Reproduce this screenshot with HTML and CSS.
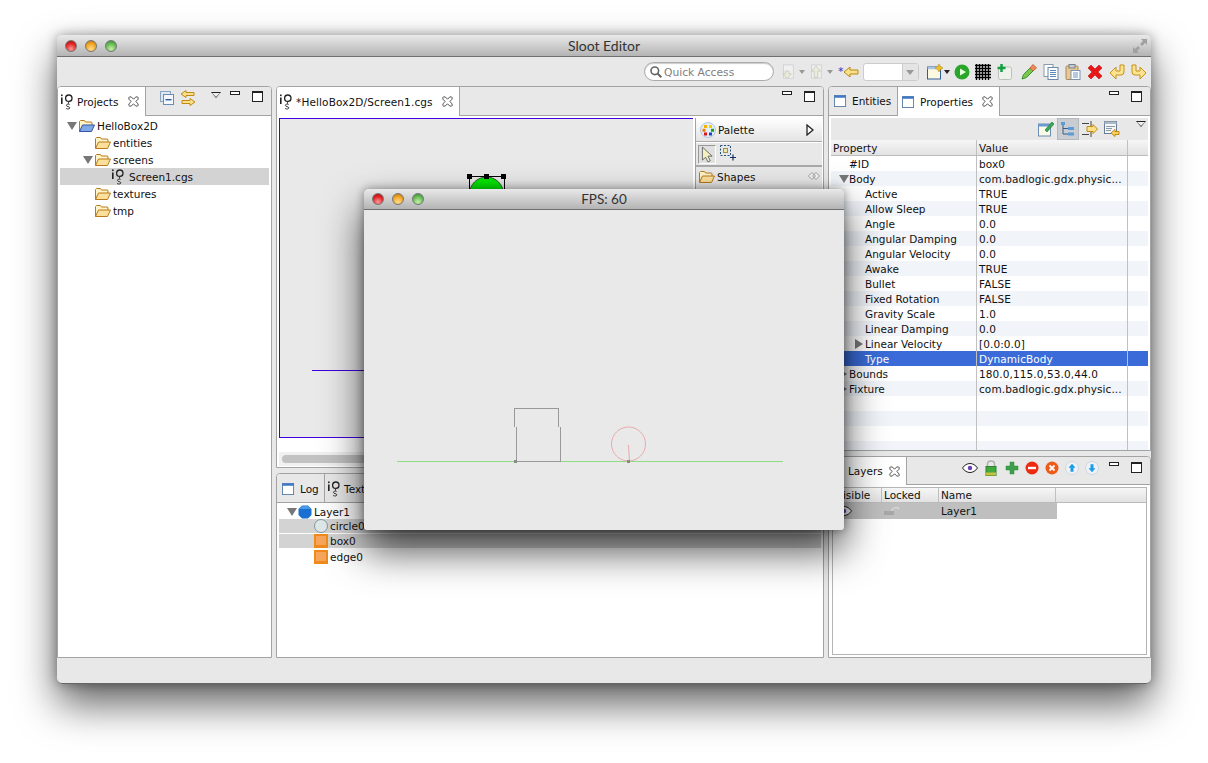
FILE: index.html
```html
<!DOCTYPE html>
<html lang="en">
  <head>
    <meta charset="UTF-8" />
    <title>Sloot Editor</title>
    <link rel="stylesheet" href="styles.css">
  </head>
  <body>
    <svg class="defs" width="0" height="0">
      <symbol id="i-ig" viewBox="0 0 12 16">
        <rect x="0" y="0.5" width="1.6" height="1.6" fill="#222" />
        <rect x="0" y="3.5" width="1.6" height="6.5" fill="#222" />
        <circle cx="7.8" cy="4.2" r="3.2" fill="none" stroke="#222" stroke-width="1.3" />
        <path d="M7.6 7.5v2.3M8.6 10.6c-1-.8-3.2-.6-3.2.8s3.4 1 3.4 2.4-2.5 1.5-3.6.7" fill="none" stroke="#333" stroke-width="1" />
      </symbol>
      <symbol id="i-folder" viewBox="0 0 16 14">
        <path d="M.5 12.5v-10l1-1h4l1 1.5h6l.5 1v2" fill="#fff3c8" stroke="#b87a1c" />
        <path d="M.5 12.5l3-6.500h12l-3 6.500z" fill="#fbdf9a" stroke="#b87a1c" />
      </symbol>
      <symbol id="i-project" viewBox="0 0 16 14">
        <path d="M.5 12.5v-10l1-1h4l1 1.5h6l.5 1v2" fill="#fff3c8" stroke="#b87a1c" />
        <path d="M.5 12.5l3-6.500h12l-3 6.500z" fill="#7fa8e6" stroke="#3553a8" />
      </symbol>
      <symbol id="i-view" viewBox="0 0 14 13">
        <rect x=".5" y=".5" width="12" height="12" fill="#fff" stroke="#5a7fa8" />
        <rect x=".5" y=".5" width="12" height="2.500" fill="#3f78c8" />
      </symbol>
      <symbol id="i-close" viewBox="0 0 12 12">
        <path d="M1.500 1h2l2.500 2.500 2.500-2.500h2l.5.5v2l-2.500 2.500 2.500 2.500v2l-.5.5h-2l-2.500-2.500-2.500 2.500h-2l-.5-.5v-2l2.500-2.500-2.500-2.500v-2z" fill="#fff" stroke="#444" />
      </symbol>
      <symbol id="i-collapse" viewBox="0 0 14 14">
        <rect x=".5" y=".5" width="10" height="10" fill="#dfe8f2" stroke="#8aa4c4" />
        <rect x="3.500" y="3.500" width="10" height="10" fill="#f4f7fb" stroke="#6a8cb4" />
        <rect x="5.500" y="8" width="6" height="1.400" fill="#2a5a98" />
      </symbol>
      <symbol id="i-link" viewBox="0 0 16 16">
        <path d="M6 .5l-5 3.500 5 3.500v-2h8v-3h-8z" fill="#fbe08a" stroke="#c08a14" />
        <path d="M10 8.500l5 3.500-5 3.500v-2h-8v-3h8z" fill="#fbe08a" stroke="#c08a14" />
      </symbol>
      <symbol id="i-palette" viewBox="0 0 16 16">
        <circle cx="8" cy="8" r="7.500" fill="#e4eef8" stroke="#b0c4dc" />
        <rect x="4" y="3" width="3" height="3" fill="#f0b400" />
        <rect x="9" y="3" width="3" height="3" fill="#e8d400" />
        <rect x="2.500" y="6.800" width="3" height="3" fill="#f08000" />
        <rect x="11" y="6.800" width="3" height="3" fill="#10a810" />
        <rect x="4" y="10.500" width="3" height="3" fill="#d81818" />
        <rect x="9" y="10.500" width="3" height="3" fill="#2040c8" />
      </symbol>
      <symbol id="i-play-hollow" viewBox="0 0 8 12">
        <path d="M1 1l6 5-6 5z" fill="#fff" stroke="#222" stroke-width="1.300" />
      </symbol>
      <symbol id="i-pin" viewBox="0 0 12 8">
        <path d="M4 .5l3.500 3.500-3.500 3.500-3.500-3.500zM8 .5l3.500 3.500-3.500 3.500-3.500-3.500z" fill="#f4f4f4" stroke="#888" stroke-width=".8" />
      </symbol>
      <symbol id="i-cursor" viewBox="0 0 14 18">
        <path d="M1.500 1v14l3.500-3 2.500 5 2.500-1.200-2.500-5h4.500z" fill="#f4f0c0" stroke="#666" />
      </symbol>
      <symbol id="i-marquee" viewBox="0 0 16 16">
        <rect x=".5" y=".5" width="10" height="10" fill="none" stroke="#25507c" stroke-dasharray="2 1.500" />
        <rect x="3.500" y="3.500" width="4" height="4" fill="#eee8b0" stroke="#99905a" />
        <path d="M13 9.500v6M10 12.500h6" stroke="#103060" stroke-width="1.200" />
      </symbol>
      <symbol id="i-back" viewBox="0 0 16 16">
        <path d="M1 8l6-5v3h8v4h-8v3z" fill="#fbe08a" stroke="#b88a14" />
      </symbol>
      <symbol id="i-dis-down" viewBox="0 0 16 18">
        <rect x="3" y="1" width="11" height="15" fill="#f0f0f0" stroke="#d0d0d0" />
        <path d="M5 8h4v3h3l-5 5-5-5h3z" fill="#e8ecd8" stroke="#c8ccc0" />
      </symbol>
      <symbol id="i-dis-up" viewBox="0 0 16 18">
        <rect x="3" y="1" width="11" height="15" fill="#f0f0f0" stroke="#d0d0d0" />
        <path d="M8 2l5 6h-3v7h-4v-7h-3z" fill="#e8ecd8" stroke="#c8ccc0" />
      </symbol>
      <symbol id="i-wizard" viewBox="0 0 16 16">
        <rect x=".5" y="3" width="13" height="12" fill="#fdf8e0" stroke="#2f5f98" />
        <rect x=".5" y="3" width="13" height="2.200" fill="#a9c4e4" />
        <path d="M12 0l1.500 2.500L16 4l-2.500 1.500L12 8l-1.500-2.500L8 4l2.500-1.500z" fill="#f0c020" stroke="#a8801a" stroke-width=".5" />
      </symbol>
      <symbol id="i-run" viewBox="0 0 16 16">
        <circle cx="8" cy="8" r="7.500" fill="#2aa62a" />
        <path d="M6 4.500l6 3.500-6 3.500z" fill="#e8ffe0" />
      </symbol>
      <symbol id="i-grid" viewBox="0 0 16 16">
        <path d="M0 1.500h16M0 4.500h16M0 7.500h16M0 10.500h16M0 13.500h16M1.500 0v16M4.500 0v16M7.500 0v16M10.500 0v16M13.500 0v16" stroke="#000" stroke-width="1.300" />
      </symbol>
      <symbol id="i-newbox" viewBox="0 0 16 16">
        <rect x="1.500" y="3" width="13" height="12.500" rx="2" fill="#f0f2ec" stroke="#bcc0bc" />
        <path d="M4.500 0v8M.5 4h8" stroke="#12a040" stroke-width="2.500" />
      </symbol>
      <symbol id="i-pencil" viewBox="0 0 16 16">
        <path d="M1 15l1.500-4.500 6.500-6.500 3 3-6.500 6.500z" fill="#78c850" stroke="#3f9030" />
        <path d="M9 4l3-3.500 3.500 3.500-3.500 3z" fill="#f08858" stroke="#c06840" />
      </symbol>
      <symbol id="i-copy" viewBox="0 0 16 16">
        <rect x="1" y=".5" width="9" height="12" fill="#fff" stroke="#8a9aaa" />
        <rect x="5" y="3.500" width="10" height="12" fill="#fdfeff" stroke="#6a88a8" />
        <path d="M7 6.500h6M7 8.500h6M7 10.500h6M7 12.500h6" stroke="#5a88b8" />
      </symbol>
      <symbol id="i-paste" viewBox="0 0 16 16">
        <rect x="1" y="2" width="12" height="13.500" rx="1" fill="#e8c890" stroke="#a88a5a" />
        <rect x="4" y=".5" width="6" height="3.500" fill="#c8ccd0" stroke="#77808a" />
        <rect x="6" y="6.500" width="9" height="9" fill="#fff" stroke="#7a94b0" />
        <path d="M8 9h5M8 11h5M8 13h5" stroke="#6a94c0" />
      </symbol>
      <symbol id="i-x" viewBox="0 0 16 16">
        <path d="M1 4l3-3 4 4 4-4 3 3-4 4 4 4-3 3-4-4-4 4-3-3 4-4z" fill="#e81818" stroke="#c01010" stroke-width=".6" />
      </symbol>
      <symbol id="i-undo" viewBox="0 0 16 16">
        <path d="M1 9l6-6v4h4v-6h4v7q0 3-3 3h-5v4z" fill="#fce48e" stroke="#c8901a" />
      </symbol>
      <symbol id="i-redo" viewBox="0 0 16 16">
        <path d="M15 9l-6-6v4h-4v-6h-4v7q0 3 3 3h5v4z" fill="#fce48e" stroke="#c8901a" />
      </symbol>
      <symbol id="i-props-new" viewBox="0 0 16 16">
        <rect x=".5" y="3" width="12" height="12" fill="#fdfbe8" stroke="#6a8cb4" />
        <rect x=".5" y="3" width="12" height="2.500" fill="#6a9cd4" />
        <path d="M7 9l7-8 2 2-7 8z" fill="#38a858" stroke="#1f7038" stroke-width=".6" />
      </symbol>
      <symbol id="i-tree" viewBox="0 0 16 16">
        <rect x="1" y="1" width="4" height="3" fill="#5a9cd8" />
        <rect x="8" y="6" width="6" height="3" fill="#5a9cd8" />
        <rect x="8" y="11.500" width="6" height="3" fill="#5a9cd8" />
        <path d="M3 4v9h5M3 7.500h5" fill="none" stroke="#3a5a88" />
      </symbol>
      <symbol id="i-filter" viewBox="0 0 16 16">
        <path d="M0 2.500h7M0 13.500h7M9 0v5M9 11v5" stroke="#444" />
        <path d="M5 5.500h6v-2l4.500 4.500-4.500 4.500v-2h-6z" fill="#fbe08a" stroke="#c08a14" />
      </symbol>
      <symbol id="i-restore" viewBox="0 0 16 16">
        <rect x=".5" y=".5" width="12" height="12" fill="#f4f6f8" stroke="#6a7c94" />
        <rect x=".5" y=".5" width="12" height="2.500" fill="#aab8c8" />
        <path d="M2 5.500h9M2 7.500h6M2 9.500h5" stroke="#8a98a8" />
        <path d="M7 12l4-3.500v2h4v3h-4v2z" fill="#fbd060" stroke="#c08a14" />
      </symbol>
      <symbol id="i-eye" viewBox="0 0 16 10">
        <path d="M.5 5c4-6 11-6 15 0-4 6-11 6-15 0z" fill="#fff" stroke="#222" />
        <circle cx="8" cy="5" r="2.200" fill="#6a3fb8" />
      </symbol>
      <symbol id="i-lock" viewBox="0 0 12 16">
        <path d="M2.500 7v-3c0-4 7-4 7 0v3" fill="none" stroke="#aab0aa" stroke-width="1.500" />
        <rect x="1" y="6.500" width="10" height="9" fill="#3fa83f" stroke="#2f802f" />
        <rect x="1" y="12.500" width="10" height="3" fill="#c8c040" />
      </symbol>
      <symbol id="i-plus" viewBox="0 0 14 14">
        <path d="M5 1h4v4h4v4h-4v4h-4v-4h-4v-4h4z" fill="#3aa04a" stroke="#2f8a3f" stroke-width=".5" />
      </symbol>
      <symbol id="i-minus" viewBox="0 0 14 14">
        <circle cx="7" cy="7" r="6.500" fill="#ee2a12" />
        <rect x="3" y="5.800" width="8" height="2.400" fill="#fff" />
      </symbol>
      <symbol id="i-cancel" viewBox="0 0 14 14">
        <circle cx="7" cy="7" r="6.500" fill="#f05a18" />
        <path d="M4.500 4.500l5 5M9.500 4.500l-5 5" stroke="#fff" stroke-width="1.800" />
      </symbol>
      <symbol id="i-up" viewBox="0 0 14 14">
        <circle cx="7" cy="7" r="6.500" fill="#eef2f6" stroke="#cfd6dc" />
        <path d="M7 2.800l3.500 4h-2v4h-3v-4h-2z" fill="#1a9ce8" />
      </symbol>
      <symbol id="i-down" viewBox="0 0 14 14">
        <circle cx="7" cy="7" r="6.500" fill="#eef2f6" stroke="#cfd6dc" />
        <path d="M7 11.200l3.500-4h-2v-4h-3v4h-2z" fill="#1a9ce8" />
      </symbol>
      <symbol id="i-layer" viewBox="0 0 14 14">
        <path d="M4 .5h6l3.500 3.500v6l-3.500 3.500h-6l-3.500-3.500v-6z" fill="#1a70d0" />
        <path d="M4 1h6l3 3h-12z" fill="#4a98e8" />
      </symbol>
      <symbol id="i-circle" viewBox="0 0 14 14">
        <circle cx="7" cy="7" r="6.500" fill="#dfe8e6" stroke="#7f9aa0" />
      </symbol>
      <symbol id="i-box" viewBox="0 0 14 14">
        <rect width="14" height="14" fill="#f08a1c" />
        <rect x="2" y="2" width="10" height="9" fill="#f6a55c" />
      </symbol>
      <symbol id="i-unlock" viewBox="0 0 16 8">
        <rect x="0" y="4" width="10" height="4" fill="#a8a8a8" />
        <path d="M8 4c0-4 6-4 7-2" fill="none" stroke="#ddd" stroke-width="1.200" />
      </symbol>
      <symbol id="i-fullscreen" viewBox="0 0 14 14">
        <path d="M8 0h6v6l-2-2-3 3-2-2 3-3zM6 14h-6v-6l2 2 3-3 2 2-3 3z" fill="#a0a0a0" />
      </symbol>
      <symbol id="i-search" viewBox="0 0 12 12">
        <circle cx="4.800" cy="4.800" r="3.800" fill="none" stroke="#666" stroke-width="1.600" />
        <path d="M7.500 7.500l3.800 3.800" stroke="#666" stroke-width="2" />
      </symbol>
    </svg>

    <div class="app-window">
      <header class="titlebar">
        <span class="light red"></span><span class="light amber"></span><span class="light green"></span>
        <span class="title">Sloot Editor</span>
        <svg class="fullscreen"><use href="#i-fullscreen" /></svg>
      </header>

      <div class="toolbar">
        <div class="quick-access"><svg class="search"><use href="#i-search" /></svg>Quick Access</div>
        <svg class="tool"><use href="#i-dis-down" /></svg><span class="caret dim"></span>
        <svg class="tool tool-tight"><use href="#i-dis-up" /></svg><span class="caret dim"></span>
        <span class="star">*</span><svg class="tool tool-back"><use href="#i-back" /></svg>
        <div class="combo"><span class="combo-btn"></span></div>
        <svg class="tool tool-wide"><use href="#i-wizard" /></svg><span class="caret"></span>
        <svg class="tool tool-run"><use href="#i-run" /></svg>
        <svg class="tool tool-grid"><use href="#i-grid" /></svg>
        <svg class="tool"><use href="#i-newbox" /></svg>
        <svg class="tool tool-wide"><use href="#i-pencil" /></svg>
        <svg class="tool"><use href="#i-copy" /></svg>
        <svg class="tool"><use href="#i-paste" /></svg>
        <svg class="tool"><use href="#i-x" /></svg>
        <svg class="tool"><use href="#i-undo" /></svg>
        <svg class="tool"><use href="#i-redo" /></svg>
      </div>

      <div class="workbench">
        <section class="panel">
          <div class="tabs">
            <div class="tab active tab-projects"><svg class="ic-ig"><use href="#i-ig" /></svg>Projects<svg class="ic-close"><use href="#i-close" /></svg></div>
            <div class="tab-tools tools-projects">
              <svg class="ic14"><use href="#i-collapse" /></svg>
              <svg class="ic16"><use href="#i-link" /></svg>
            </div>
            <div class="view-ctrl"><span class="view-menu"></span><span class="min"></span><span class="max"></span></div>
          </div>
          <ul class="tree tree-projects">
            <li class="row"><span class="twist open"></span><svg class="ic-folder"><use href="#i-project" /></svg>HelloBox2D</li>
            <li class="row d1"><span class="twist"></span><svg class="ic-folder"><use href="#i-folder" /></svg>entities</li>
            <li class="row d1"><span class="twist open"></span><svg class="ic-folder"><use href="#i-folder" /></svg>screens</li>
            <li class="row d2 sel"><span class="twist"></span><svg class="ic-ig"><use href="#i-ig" /></svg>Screen1.cgs</li>
            <li class="row d1"><span class="twist"></span><svg class="ic-folder"><use href="#i-folder" /></svg>textures</li>
            <li class="row d1"><span class="twist"></span><svg class="ic-folder"><use href="#i-folder" /></svg>tmp</li>
          </ul>
        </section>

        <div class="stack stack-center">
          <section class="panel editor-panel">
            <div class="tabs">
              <div class="tab active tab-editor"><svg class="ic-ig"><use href="#i-ig" /></svg>*HelloBox2D/Screen1.cgs<svg class="ic-close"><use href="#i-close" /></svg></div>
              <div class="view-ctrl"><span class="min"></span><span class="max"></span></div>
            </div>
            <div class="editor-body">
              <div class="editor">
                <div class="canvas">
                  <svg class="shape" width="44" height="20">
                    <circle cx="21.500" cy="21" r="17" fill="#00e800" stroke="#333" stroke-width=".8" />
                    <path d="M4.500 3.500h35M4.500 3.500v16M39.500 3.500v16" fill="none" stroke="#000" />
                    <rect x="2" y="1" width="5" height="5" />
                    <rect x="19" y="1" width="5" height="5" />
                    <rect x="36" y="1" width="5" height="5" />
                  </svg>
                  <div class="edge-line"></div>
                </div>
                <div class="hscroll"><div class="hscroll-thumb"></div></div>
              </div>
              <aside class="palette">
                <div class="palette-head"><svg class="ic16"><use href="#i-palette" /></svg>Palette<svg class="palette-arrow"><use href="#i-play-hollow" /></svg></div>
                <div class="palette-tools">
                  <span class="palette-tool on"><svg class="ic-cursor"><use href="#i-cursor" /></svg></span>
                  <span class="palette-tool"><svg class="ic16"><use href="#i-marquee" /></svg></span>
                </div>
                <div class="palette-drawer"><svg class="ic-folder"><use href="#i-folder" /></svg>Shapes<svg class="drawer-pin"><use href="#i-pin" /></svg></div>
              </aside>
            </div>
          </section>

          <section class="panel log-panel">
            <div class="tabs">
              <div class="tab tab-log"><svg class="ic-view"><use href="#i-view" /></svg>Log</div>
              <div class="tab tab-text"><svg class="ic-ig"><use href="#i-ig" /></svg>Text</div>
            </div>
            <ul class="tree tree-log">
              <li class="row"><span class="twist open"></span><svg class="ic-obj"><use href="#i-layer" /></svg>Layer1</li>
              <li class="row d1 sel"><span class="twist"></span><svg class="ic-obj"><use href="#i-circle" /></svg>circle0</li>
              <li class="row d1 sel"><span class="twist"></span><svg class="ic-obj"><use href="#i-box" /></svg>box0</li>
              <li class="row d1"><span class="twist"></span><svg class="ic-obj"><use href="#i-box" /></svg>edge0</li>
            </ul>
          </section>
        </div>

        <div class="stack stack-right">
          <section class="panel props-panel">
            <div class="tabs">
              <div class="tab tab-entities"><svg class="ic-view"><use href="#i-view" /></svg>Entities</div>
              <div class="tab active tab-props"><svg class="ic-view"><use href="#i-view" /></svg>Properties<svg class="ic-close"><use href="#i-close" /></svg></div>
              <div class="view-ctrl"><span class="min"></span><span class="max"></span></div>
            </div>
            <div class="props-tools">
              <svg class="ic16"><use href="#i-props-new" /></svg>
              <span class="toggle"><svg class="ic16"><use href="#i-tree" /></svg></span>
              <svg class="ic16"><use href="#i-filter" /></svg>
              <svg class="ic16"><use href="#i-restore" /></svg>
              <span class="view-menu"></span>
            </div>
            <div class="props-table">
              <div class="props-head"><span class="col-name">Property</span><span class="col-value">Value</span><span class="col-rest"></span></div>
              <div class="prop"><span class="col-name in1">#ID</span><span class="col-value">box0</span><span class="col-rest"></span></div>
              <div class="prop"><span class="col-name in1"><i class="twist open prop-twist"></i>Body</span><span class="col-value">com.badlogic.gdx.physic...</span><span class="col-rest"></span></div>
              <div class="prop"><span class="col-name in2">Active</span><span class="col-value">TRUE</span><span class="col-rest"></span></div>
              <div class="prop"><span class="col-name in2">Allow Sleep</span><span class="col-value">TRUE</span><span class="col-rest"></span></div>
              <div class="prop"><span class="col-name in2">Angle</span><span class="col-value">0.0</span><span class="col-rest"></span></div>
              <div class="prop"><span class="col-name in2">Angular Damping</span><span class="col-value">0.0</span><span class="col-rest"></span></div>
              <div class="prop"><span class="col-name in2">Angular Velocity</span><span class="col-value">0.0</span><span class="col-rest"></span></div>
              <div class="prop"><span class="col-name in2">Awake</span><span class="col-value">TRUE</span><span class="col-rest"></span></div>
              <div class="prop"><span class="col-name in2">Bullet</span><span class="col-value">FALSE</span><span class="col-rest"></span></div>
              <div class="prop"><span class="col-name in2">Fixed Rotation</span><span class="col-value">FALSE</span><span class="col-rest"></span></div>
              <div class="prop"><span class="col-name in2">Gravity Scale</span><span class="col-value">1.0</span><span class="col-rest"></span></div>
              <div class="prop"><span class="col-name in2">Linear Damping</span><span class="col-value">0.0</span><span class="col-rest"></span></div>
              <div class="prop"><span class="col-name in2"><i class="twist closed prop-twist"></i>Linear Velocity</span><span class="col-value">[0.0:0.0]</span><span class="col-rest"></span></div>
              <div class="prop picked"><span class="col-name in2">Type</span><span class="col-value">DynamicBody</span><span class="col-rest"></span></div>
              <div class="prop"><span class="col-name in1"><i class="twist closed prop-twist"></i>Bounds</span><span class="col-value">180.0,115.0,53.0,44.0</span><span class="col-rest"></span></div>
              <div class="prop"><span class="col-name in1"><i class="twist closed prop-twist"></i>Fixture</span><span class="col-value">com.badlogic.gdx.physic...</span><span class="col-rest"></span></div>
              <div class="prop"><span class="col-name"></span><span class="col-value"></span><span class="col-rest"></span></div>
              <div class="prop"><span class="col-name"></span><span class="col-value"></span><span class="col-rest"></span></div>
              <div class="prop"><span class="col-name"></span><span class="col-value"></span><span class="col-rest"></span></div>
              <div class="prop"><span class="col-name"></span><span class="col-value"></span><span class="col-rest"></span></div>
            </div>
          </section>

          <section class="panel layers-panel">
            <div class="tabs">
              <div class="tab active tab-layers">Layers<svg class="ic-close"><use href="#i-close" /></svg></div>
              <div class="tab-tools tools-layers">
                <svg class="ic-eye"><use href="#i-eye" /></svg>
                <svg class="ic-lock"><use href="#i-lock" /></svg>
                <svg class="ic14"><use href="#i-plus" /></svg>
                <svg class="ic14"><use href="#i-minus" /></svg>
                <svg class="ic14"><use href="#i-cancel" /></svg>
                <svg class="ic14"><use href="#i-up" /></svg>
                <svg class="ic14"><use href="#i-down" /></svg>
              </div>
              <div class="view-ctrl"><span class="min"></span><span class="max"></span></div>
            </div>
            <div class="layers-table">
              <div class="layers-head"><span class="lcol-vis">Visible</span><span class="lcol-lock">Locked</span><span class="lcol-name">Name</span></div>
              <div class="layers-row"><span class="lcol-vis"><svg class="ic-eye"><use href="#i-eye" /></svg></span><span class="lcol-lock"><svg class="ic-unlock"><use href="#i-unlock" /></svg></span><span class="lcol-name">Layer1</span></div>
            </div>
          </section>
        </div>
      </div>

      <div class="statusbar"></div>
    </div>

    <div class="fps-window">
      <header class="titlebar titlebar-fps">
        <span class="light red"></span><span class="light amber"></span><span class="light green"></span>
        <span class="title">FPS: 60</span>
      </header>
      <svg class="world" width="480" height="320">
        <path d="M33 251.500h386" stroke="#8fdc85" shape-rendering="crispEdges" />
        <circle cx="264.500" cy="234" r="17" fill="none" stroke="#e9aaaa" />
        <path d="M264.500 235l1 16" stroke="#e9aaaa" />
        <path d="M150.500 217v-18.500h44v18M152.500 217v34.500h43.500v-34.500" fill="none" stroke="#999" shape-rendering="crispEdges" />
        <rect x="150" y="250" width="3" height="3" fill="#8a8a8a" />
        <rect x="263" y="250" width="3" height="3" fill="#8a8a8a" />
      </svg>
    </div>
  </body>
</html>
```

FILE: styles.css
```css
* {
  box-sizing: border-box;
}
html,
body {
  height: 763px;
  overflow: hidden;
}
body {
  margin: 0;
  padding: 35px 0 0 57px;
  position: relative;
  background-color: #fff;
  font-family: "DejaVu Sans", sans-serif;
  font-size: 10.5px;
  color: #111;
}
ul {
  list-style: none;
  margin: 0;
  padding: 0;
}
svg {
  display: block;
  flex: none;
}
.defs {
  position: absolute;
}

.app-window {
  width: 1094px;
  height: 649px;
  display: flex;
  flex-direction: column;
  background-color: #e8e8e8;
  border-radius: 5px;
  box-shadow: 0 20px 40px rgba(0, 0, 0, 0.62), 0 0 12px rgba(0, 0, 0, 0.35);
}

/* title bars */
.titlebar {
  height: 22px;
  flex: none;
  display: flex;
  align-items: center;
  gap: 8px;
  padding-left: 8px;
  position: relative;
  background: linear-gradient(#e9e9e9, #b4b4b4);
  border-bottom: 1px solid #6f6f6f;
  border-radius: 5px 5px 0 0;
}
.title {
  position: absolute;
  left: 0;
  right: 0;
  text-align: center;
  font-family: "Lato", sans-serif;
  font-size: 14px;
  color: #333;
}
.fullscreen {
  width: 14px;
  height: 14px;
  position: absolute;
  right: 4px;
  top: 4px;
}
.light {
  width: 12px;
  height: 12px;
  border-radius: 50%;
  border: 1px solid #777;
  position: relative;
  z-index: 1;
}
.red {
  background: radial-gradient(circle at 50% 80%, #ff9a9a, #e02020 60%, #a01010);
}
.amber {
  background: radial-gradient(circle at 50% 80%, #ffe08a, #f0a020 60%, #a87010);
}
.green {
  background: radial-gradient(circle at 50% 80%, #c8f0a8, #60b850 60%, #3a8030);
}

/* main toolbar */
.toolbar {
  height: 29px;
  flex: none;
  display: flex;
  align-items: center;
  padding-left: 587px;
}
.quick-access {
  width: 130px;
  height: 19px;
  display: flex;
  align-items: center;
  gap: 2px;
  padding: 1px 0 0 5px;
  background-color: #fff;
  border: 1px solid #aaa;
  border-radius: 10px;
  color: #808080;
  font-size: 10.7px;
  box-shadow: inset 0 1px 1px rgba(0, 0, 0, 0.2);
}
.search {
  width: 12px;
  height: 12px;
}
.tool {
  width: 16px;
  height: 16px;
  margin-left: 6px;
}
.tool-tight {
  margin-left: 3px;
}
.tool-back {
  margin-left: 0;
}
.tool-wide {
  margin-left: 8px;
}
.tool-run {
  margin-left: 4px;
}
.tool-grid {
  margin-left: 5px;
}
.star {
  margin-left: 5px;
  width: 5px;
  color: #1a3ac0;
  font-size: 11px;
}
.caret {
  margin-left: 3px;
  border-left: 3.5px solid transparent;
  border-right: 3.5px solid transparent;
  border-top: 4px solid #222;
}
.caret.dim {
  border-top-color: #999;
}
.tool-wide + .caret {
  margin-left: 1px;
}
.combo {
  width: 56px;
  height: 18px;
  margin-left: 4px;
  display: flex;
  justify-content: flex-end;
  background-color: #fff;
  border: 1px solid #ccc;
  border-radius: 3px;
}
.combo-btn {
  width: 16px;
  background-color: #e4e4e4;
  border-left: 1px solid #ccc;
  position: relative;
}
.combo-btn::after {
  content: "";
  position: absolute;
  left: 3px;
  top: 6px;
  border-left: 4px solid transparent;
  border-right: 4px solid transparent;
  border-top: 5px solid #999;
}

/* panels */
.workbench {
  height: 572px;
  flex: none;
  display: grid;
  grid-template-columns: 215px 548px 323px;
  gap: 4px;
}
.stack {
  display: flex;
  flex-direction: column;
  gap: 5px;
}
.panel {
  min-height: 0;
  display: flex;
  flex-direction: column;
  background-color: #fff;
  border: 1px solid #a3a3a3;
  border-radius: 4px 4px 0 0;
  overflow: hidden;
}
.editor-panel {
  height: 382px;
  flex: none;
}
.log-panel {
  flex: 1;
}
.props-panel {
  height: 365px;
  flex: none;
}
.layers-panel {
  flex: 1;
}
.tabs {
  height: 29px;
  flex: none;
  display: flex;
  background-color: #e8e8e8;
  border-bottom: 1px solid #a3a3a3;
  position: relative;
}
.tab {
  display: flex;
  align-items: center;
  padding-left: 3px;
  white-space: nowrap;
  border-right: 1px solid #a3a3a3;
}
.tab.active {
  background-color: #fff;
  height: 29px;
}
.ic-ig {
  width: 12px;
  height: 16px;
  margin-right: 4px;
}
.ic-view {
  width: 13px;
  height: 12px;
  margin-right: 5px;
}
.ic-close {
  width: 11px;
  height: 11px;
  margin-left: auto;
  margin-right: 6px;
}
.tab-projects {
  width: 88px;
}
.tab-editor {
  width: 183px;
  letter-spacing: 0.13px;
}
.tab-log {
  width: 48px;
  padding: 1px 0 0 5px;
}
.tab-text {
  width: 70px;
  padding-top: 1px;
}
.tab-entities {
  width: 69px;
  padding-left: 5px;
}
.tab-props {
  width: 102px;
  padding-left: 4px;
}
.tab-layers {
  width: 78px;
  padding-left: 19px;
}
.tab-tools {
  display: flex;
  align-items: center;
  position: absolute;
  top: 0;
}
.tools-projects {
  left: 102px;
  top: 3px;
  gap: 6px;
}
.tools-layers {
  left: 133px;
  top: 2px;
  gap: 6px;
  height: 18px;
}
.tools-layers .ic-lock {
  margin: 0 2px 0 1px;
}
.ic16 {
  width: 16px;
  height: 16px;
}
.ic14 {
  width: 14px;
  height: 14px;
}
.ic-eye {
  width: 16px;
  height: 10px;
}
.ic-lock {
  width: 12px;
  height: 16px;
}
.view-ctrl {
  position: absolute;
  right: 8px;
  top: 4px;
  display: flex;
  align-items: flex-start;
  gap: 12px;
}
.view-menu {
  display: block;
  position: relative;
  width: 0;
  height: 0;
  margin-top: 1px;
  margin-right: -3px;
  border-left: 5.5px solid transparent;
  border-right: 5.5px solid transparent;
  border-top: 6px solid #222;
}
.view-menu::after {
  content: "";
  position: absolute;
  left: -4px;
  top: -5px;
  border-left: 4px solid transparent;
  border-right: 4px solid transparent;
  border-top: 4.5px solid #eee;
}
.min {
  width: 10px;
  height: 4px;
  border: 1px solid #222;
  background-color: #fff;
}
.max {
  width: 11px;
  height: 11px;
  border: 1px solid #222;
  border-top-width: 2px;
  background-color: #fff;
}

/* trees */
.tree {
  flex: 1;
  padding: 1px 2px;
}
.row {
  display: flex;
  align-items: center;
  height: 17px;
  padding-left: 7px;
  white-space: nowrap;
}
.row.d1 {
  padding-left: 23px;
}
.row.d2 {
  padding-left: 39px;
}
.row.sel {
  background-color: #d3d3d3;
}
.row .ic-ig {
  margin: 0 5px 0 1px;
}
.twist {
  display: block;
  flex: none;
  width: 12px;
  height: 8px;
}
.twist.open::before {
  content: "";
  display: block;
  border-left: 5px solid transparent;
  border-right: 5px solid transparent;
  border-top: 8px solid #777;
  width: 0;
}
.twist.closed::before {
  content: "";
  display: block;
  border-top: 5px solid transparent;
  border-bottom: 5px solid transparent;
  border-left: 8px solid #777;
  width: 0;
  margin-top: -1px;
}
.ic-folder {
  width: 16px;
  height: 14px;
  margin-right: 2px;
}
.tree-log .row {
  height: 15px;
  padding-left: 8px;
}
.tree-log .row.d1 {
  padding-left: 24px;
}
.tree-log .row.sel {
  background-clip: padding-box;
  border-bottom: 1px solid transparent;
}
.tree-log .twist {
  width: 11px;
}
.ic-obj {
  width: 14px;
  height: 14px;
  margin-right: 2px;
}

/* editor */
.editor-body {
  flex: 1;
  min-height: 0;
  display: flex;
  padding: 2px 0 0 2px;
}
.editor {
  width: 416px;
  flex: none;
}
.canvas {
  height: 320px;
  position: relative;
  background-color: #e9e9e9;
  border: 1px solid #4000e0;
  border-right: 0;
  margin-right: 2px;
}
.shape {
  position: absolute;
  left: 185px;
  top: 54px;
}
.edge-line {
  position: absolute;
  left: 32px;
  top: 251px;
  width: 200px;
  height: 1px;
  background-color: #4000e0;
}
.hscroll {
  height: 14px;
  margin-top: 14px;
  padding: 3px 0 0;
  background-color: #f0f0f0;
}
.hscroll-thumb {
  height: 8px;
  margin-left: 3px;
  border-radius: 4px;
  background-color: #c2c2c2;
}
.palette {
  flex: 1;
  margin-right: 1px;
  background-color: #e8e8e8;
  border-left: 1px solid #a3a3a3;
}
.palette-head {
  height: 24px;
  display: flex;
  align-items: center;
  gap: 2px;
  padding-left: 4px;
  position: relative;
  background: linear-gradient(#fff, #e4e4e4);
  border-bottom: 1px solid #aaa;
}
.palette-arrow {
  position: absolute;
  right: 8px;
  top: 6px;
  width: 8px;
  height: 12px;
}
.palette-tools {
  height: 24px;
  display: flex;
  gap: 3px;
  padding: 2px;
  border-top: 1px solid #fff;
  border-bottom: 1px solid #aaa;
}
.palette-tool {
  width: 18px;
  height: 19px;
  display: flex;
  justify-content: center;
}
.palette-tool.on {
  background-color: #e0e0e0;
  border: 1px solid #999;
  border-right-color: #fff;
  border-bottom-color: #fff;
}
.ic-cursor {
  width: 13px;
  height: 17px;
}
.palette-drawer {
  height: 20px;
  display: flex;
  align-items: center;
  padding-left: 3px;
  position: relative;
  border-top: 1px solid #aaa;
}
.drawer-pin {
  position: absolute;
  right: 2px;
  top: 5px;
  width: 12px;
  height: 8px;
}

/* properties */
.props-tools {
  height: 22px;
  flex: none;
  margin: 2px 2px 0;
  display: flex;
  align-items: center;
  gap: 6px;
  padding-left: 207px;
  background-color: #e8e8e8;
  position: relative;
}
.toggle {
  width: 22px;
  height: 22px;
  display: flex;
  align-items: center;
  justify-content: center;
  margin: 0 -3px;
  background-color: #c9cdd1;
  border: 1px solid #b4b8bc;
}
.props-tools .view-menu {
  position: absolute;
  right: 2px;
  top: 3px;
  margin: 0;
}
.props-table {
  flex: 1;
  min-height: 0;
  margin: 0 2px;
  overflow: hidden;
}
.props-head {
  height: 16px;
  display: flex;
  align-items: center;
  background: linear-gradient(#f6f6f6, #e2e2e2);
  border-bottom: 1px solid #bbb;
}
.prop {
  height: 15px;
  display: flex;
  align-items: center;
  white-space: nowrap;
}
.prop:nth-child(odd) {
  background-color: #f1f5fa;
}
.prop.picked {
  background-color: #3a6bd8;
  color: #fff;
}
.col-name {
  width: 145px;
  height: 100%;
  display: flex;
  align-items: center;
  padding-left: 2px;
  position: relative;
}
.col-value {
  width: 151px;
  height: 100%;
  display: flex;
  align-items: center;
  padding-left: 2px;
  border-left: 1px solid #c0c0c0;
  letter-spacing: 0.1px;
}
.col-rest {
  flex: 1;
  height: 100%;
  border-left: 1px solid #c0c0c0;
}
.in1 {
  padding-left: 18px;
}
.in2 {
  padding-left: 34px;
}
.prop-twist {
  position: absolute;
  margin-left: -10px;
  width: 10px;
}

/* layers */
.layers-panel .tabs {
  height: 28px;
}
.layers-panel .tab.active {
  height: 28px;
}
.layers-panel .view-ctrl {
  top: 5px;
}
.layers-table {
  flex: 1;
  margin: 2px 3px;
  border: 1px solid #b5b5b5;
}
.layers-head {
  height: 15px;
  display: flex;
  align-items: center;
  background: linear-gradient(#f6f6f6, #e2e2e2);
  border-bottom: 1px solid #bbb;
}
.layers-head span {
  height: 100%;
  display: flex;
  align-items: center;
  border-right: 1px solid #c0c0c0;
}
.layers-row {
  height: 16px;
  width: 224px;
  display: flex;
  align-items: center;
  background-color: #bfbfbf;
}
.lcol-vis {
  width: 49px;
  padding-left: 3px;
  flex: none;
}
.lcol-lock {
  width: 57px;
  padding-left: 2px;
  flex: none;
}
.lcol-name {
  width: 117px;
  padding-left: 2px;
  flex: none;
}
.ic-unlock {
  width: 16px;
  height: 8px;
}

.statusbar {
  flex: 1;
  border-radius: 0 0 5px 5px;
  border-bottom: 1px solid #666;
}

/* the running game sits over the editor like a second desktop window */
.fps-window {
  position: absolute;
  left: 364px;
  top: 189px;
  width: 480px;
  height: 341px;
  background-color: #e9e9e9;
  border-radius: 5px 5px 3px 3px;
  box-shadow: 0 20px 40px rgba(0, 0, 0, 0.72), 0 0 10px rgba(0, 0, 0, 0.4);
}
.titlebar-fps {
  height: 21px;
}
.titlebar-fps .title {
  font-size: 13.5px;
  margin-top: -1px;
}
```
